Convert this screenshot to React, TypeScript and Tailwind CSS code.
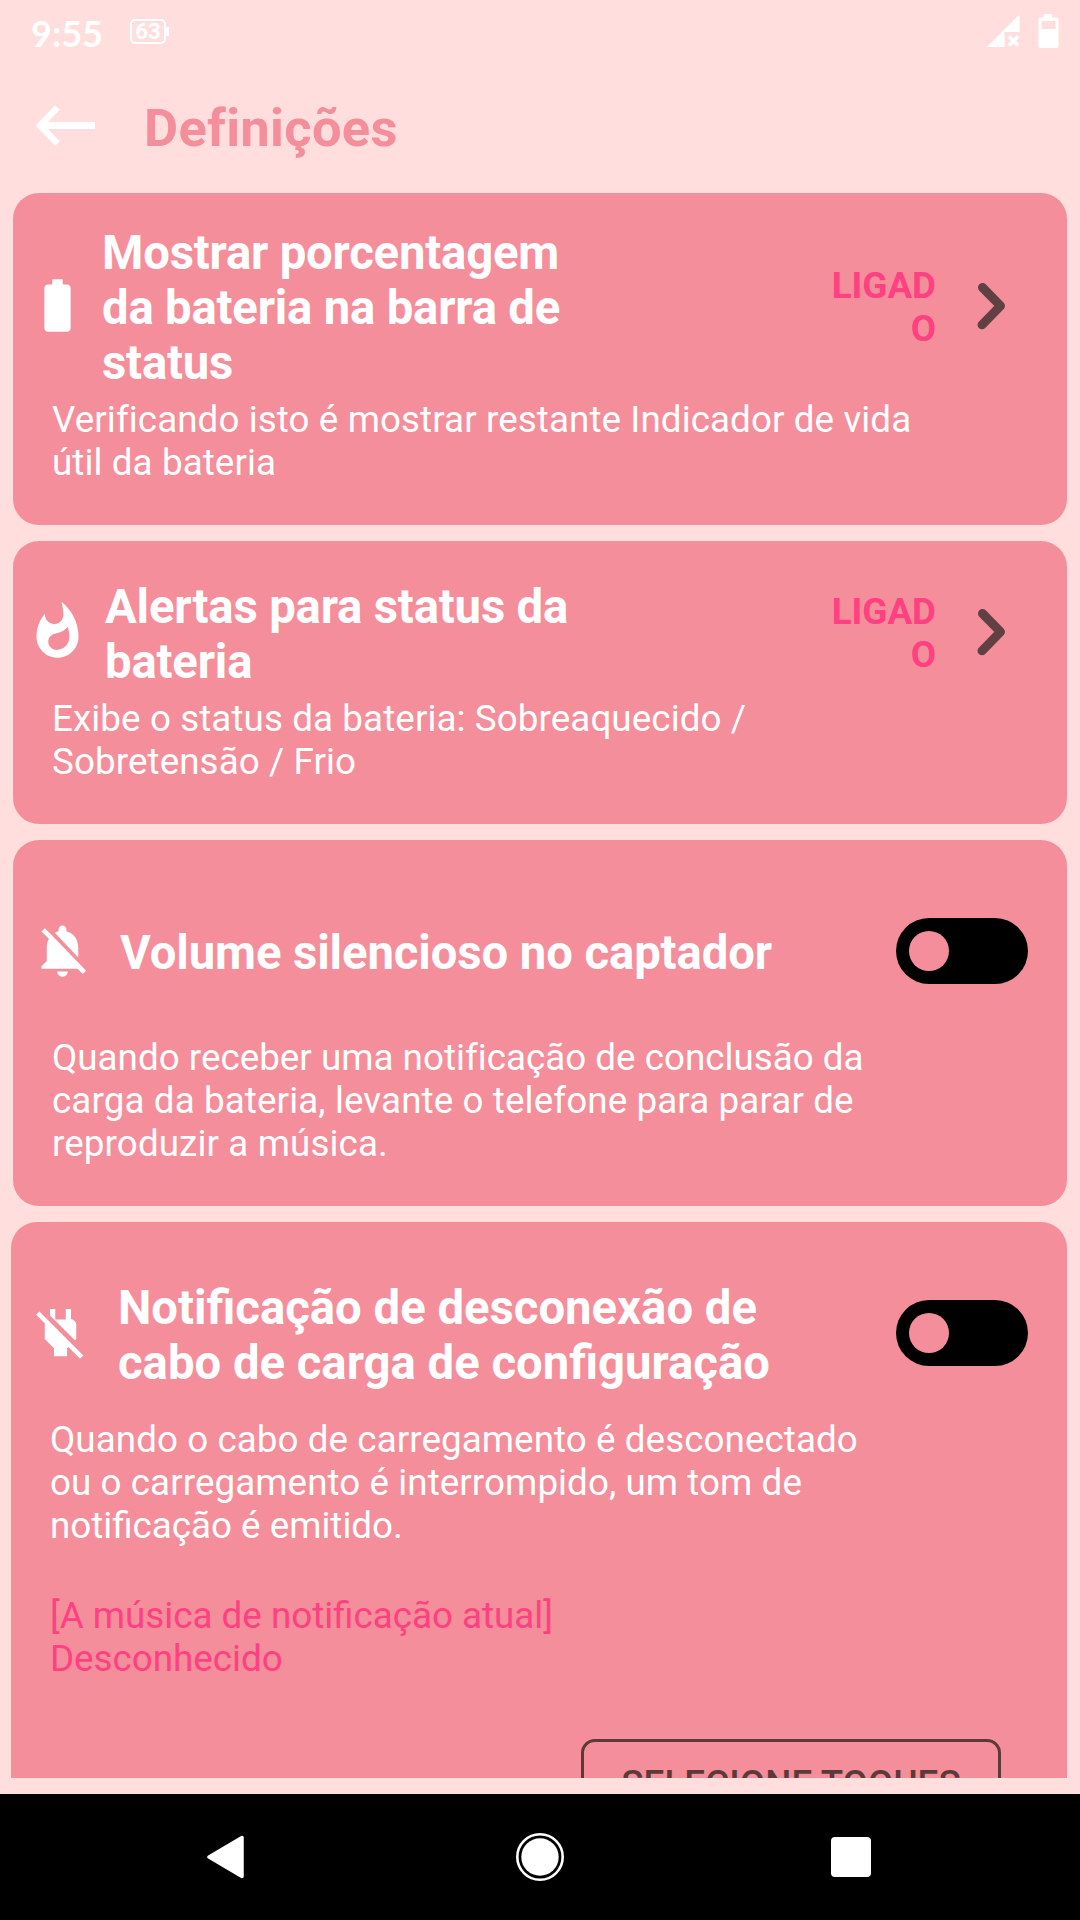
import { useState } from "react";
import type { ReactNode } from "react";
import { MdBatteryFull, MdNotificationsOff, MdPowerOff, MdWhatshot } from "react-icons/md";

function StatusBar() {
  return (
    <div className="flex h-16 items-start justify-between text-white">
      <div className="flex items-start">
        <span className="ml-[31px] mt-[11px] font-['Lato',sans-serif] text-[36px] font-bold leading-[44px]">
          9:55
        </span>
        <div className="ml-[27px] mt-[19px] flex items-center">
          <span className="flex h-[25px] w-9 items-center justify-center rounded-[5px] border-2 border-white text-[22px] font-bold leading-none">
            63
          </span>
          <span className="h-[9px] w-[3px] bg-white" />
        </div>
      </div>
      <div className="mr-[21px] mt-[14px] flex items-start gap-[18px]">
        <svg width="34" height="34" viewBox="0 0 34 34">
          <path d="M33.5 0.5V18H18.5v15H1z" fill="currentColor" />
          <path d="M23 22.5l9 9M32 22.5l-9 9" stroke="currentColor" strokeWidth="3.6" />
        </svg>
        <svg width="21" height="34" viewBox="0 0 21 34">
          <path
            fillRule="evenodd"
            fill="currentColor"
            d="M6 0h8v3.5h4.5a2 2 0 0 1 2 2V32a2 2 0 0 1-2 2H2.5a2 2 0 0 1-2-2V5.500a2 2 0 0 1 2-2H6zM3.500 7v8h14V7z"
          />
        </svg>
      </div>
    </div>
  );
}

function Header() {
  return (
    <header className="flex h-[129px] items-start">
      <button className="ml-9 mt-[41px]">
        <svg width="60" height="41" viewBox="0 0 60 41" fill="none" stroke="white">
          <path d="M4 20.500H59" strokeWidth="7" />
          <path d="M21.500 2.500L4 20.500l17.500 18" strokeWidth="6.500" strokeLinejoin="round" />
        </svg>
      </button>
      <h1 className="ml-12 mt-[33px] text-[52.5px] font-bold leading-[62px] tracking-[0.3px] text-[#f58e9b]">
        Definições
      </h1>
    </header>
  );
}

function Chevron() {
  return (
    <svg width="30" height="50" viewBox="0 0 30 50" fill="none" className="-mt-[2px]">
      <path d="M6.500 6.500L24.500 24.800L6 43.800" stroke="#614044" strokeWidth="9" strokeLinecap="round" strokeLinejoin="round" />
    </svg>
  );
}

function Value({ children }: { children: ReactNode }) {
  return (
    <div className="-mt-1 ml-auto mr-[61px] flex items-center">
      <span className="mr-10 w-[110px] break-all text-right text-[36.75px] font-bold leading-[43px] text-[#ff4081]">
        {children}
      </span>
      <Chevron />
    </div>
  );
}

function Toggle() {
  const [on, setOn] = useState(false);
  return (
    <button
      onClick={() => setOn(!on)}
      className={`-mt-1 ml-auto mr-[39px] flex h-[66px] w-[132px] items-center rounded-full bg-black px-[13px] ${on ? "justify-end" : "justify-start"}`}
    >
      <span className="size-10 rounded-full bg-[#f58e9b]" />
    </button>
  );
}

function Title({ children, className }: { children: ReactNode; className: string }) {
  return <h2 className={`shrink-0 text-[47.25px] font-bold leading-[55px] ${className}`}>{children}</h2>;
}

function Description({ children, className }: { children: ReactNode; className: string }) {
  return <p className={`whitespace-pre-line text-[36.75px] leading-[43px] ${className}`}>{children}</p>;
}

export default function App() {
  return (
    <div className="flex h-[1920px] w-[1080px] flex-col overflow-hidden bg-[#ffdedd] font-['Roboto',sans-serif] text-white">
      <StatusBar />
      <Header />

      <main className="flex h-[1585px] flex-col gap-4 overflow-hidden pl-[13px] pr-[13px]">
        <section className="shrink-0 rounded-[26px] bg-[#f58e9b] pb-[41px] pt-[33px]">
          <div className="flex items-center">
            <MdBatteryFull className="-mt-1.5 ml-[13px] size-[63px] shrink-0" />
            <Title className="ml-[13px] w-[480px] tracking-[-0.19px]">
              Mostrar porcentagem da bateria na barra de status
            </Title>
            <Value>LIGADO</Value>
          </div>
          <Description className="ml-[39px] mt-[7px] tracking-[0.1px]">
            {"Verificando isto é mostrar restante Indicador de vida\nútil da bateria"}
          </Description>
        </section>

        <section className="shrink-0 rounded-[26px] bg-[#f58e9b] pb-[41px] pt-[39px]">
          <div className="flex items-center">
            <MdWhatshot className="-mt-2 ml-[13px] size-[63px] shrink-0" />
            <Title className="ml-4 w-[480px] tracking-[-0.17px]">Alertas para status da bateria</Title>
            <Value>LIGADO</Value>
          </div>
          <Description className="ml-[39px] mt-[7px] tracking-[0.1px]">
            {"Exibe o status da bateria: Sobreaquecido /\nSobretensão / Frio"}
          </Description>
        </section>

        <section className="shrink-0 rounded-[26px] bg-[#f58e9b] pb-[41px] pt-[68px]">
          <div className="flex h-[90px] items-center">
            <MdNotificationsOff className="-mt-1.5 ml-[18px] size-[63px] shrink-0" />
            <Title className="ml-[26px] mt-px tracking-[-0.09px]">Volume silencioso no captador</Title>
            <Toggle />
          </div>
          <Description className="ml-[39px] mt-[38px] tracking-[0.12px]">
            <span className="tracking-[0.02px]">Quando receber uma notificação de conclusão da</span>
            {"\ncarga da bateria, levante o telefone para parar de\nreproduzir a música."}
          </Description>
        </section>

        <section className="-ml-[2px] shrink-0 rounded-[26px] bg-[#f58e9b] pb-[41px] pt-[59px]">
          <div className="flex items-center">
            <MdPowerOff className="-mt-2 ml-[18px] size-[63px] shrink-0" />
            <Title className="ml-[26px] w-[680px]">Notificação de desconexão de cabo de carga de configuração</Title>
            <div className="-mt-[2px] ml-auto">
              <Toggle />
            </div>
          </div>
          <Description className="ml-[39px] mt-[27px] tracking-[0.08px]">
            {"Quando o cabo de carregamento é desconectado\nou o carregamento é interrompido, um tom de\n"}
            <span className="tracking-normal">notificação é emitido.</span>
          </Description>
          <Description className="ml-[39px] mt-[47px] text-[#ff4081]">
            {"[A música de notificação atual]\nDesconhecido"}
          </Description>
          <button className="ml-auto mr-[66px] mt-[59px] flex h-[90px] w-[420px] items-center justify-center rounded-[14px] border-[3px] border-[#5d3a3a] text-[36.75px] font-medium tracking-[0.1px] text-[#5d3a3a]">
            SELECIONE TOQUES
          </button>
        </section>
      </main>

      <nav className="mt-4 flex h-[126px] items-center bg-black">
        <svg width="38" height="44" viewBox="0 0 38 44" className="ml-[207px]">
          <path
            d="M2 22L35 2.500V41.500z"
            fill="white"
            stroke="white"
            strokeWidth="3.500"
            strokeLinejoin="round"
          />
        </svg>
        <svg width="48" height="48" viewBox="0 0 48 48" className="ml-[271px]">
          <circle cx="24" cy="24" r="22.700" fill="none" stroke="white" strokeWidth="2.600" />
          <circle cx="24" cy="24" r="18.700" fill="white" />
        </svg>
        <span className="ml-[267px] h-10 w-10 rounded-[4px] bg-white" />
      </nav>
    </div>
  );
}
